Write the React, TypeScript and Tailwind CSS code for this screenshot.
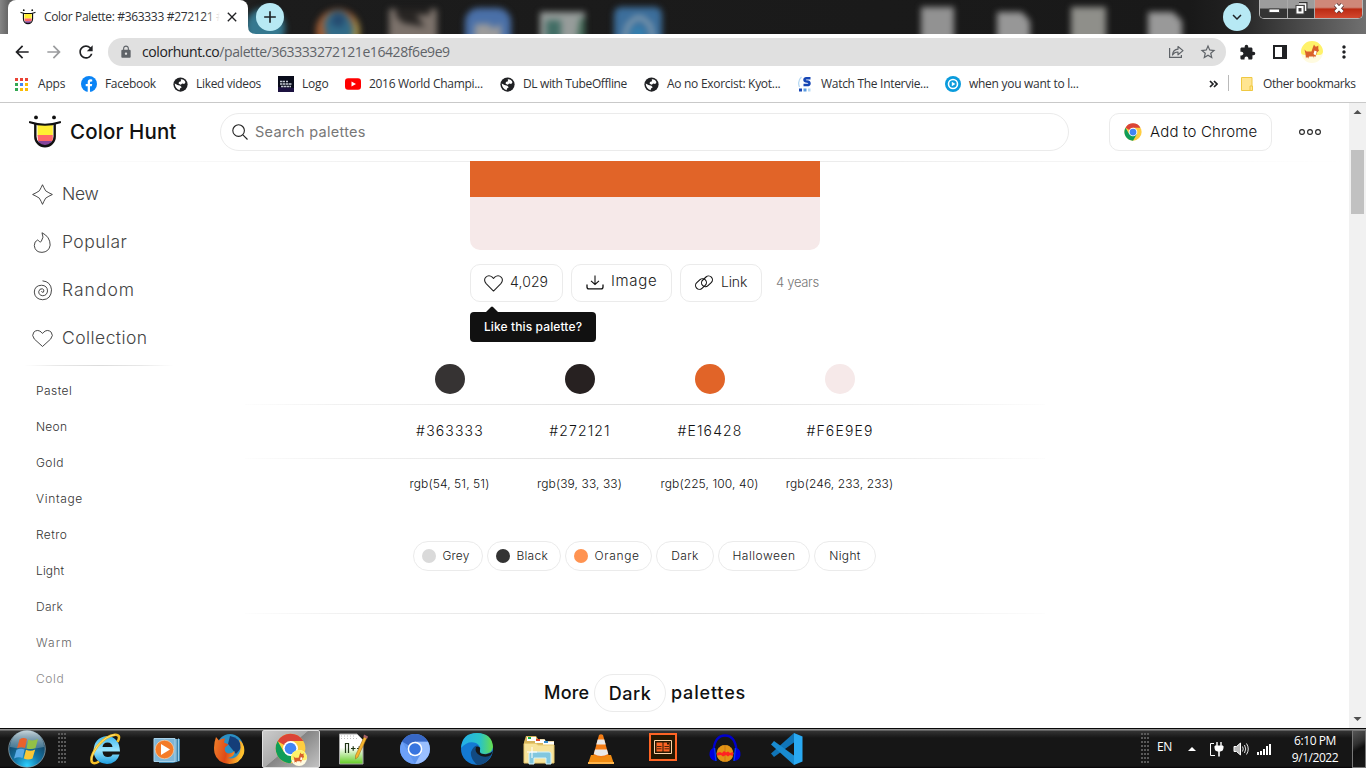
import type { ReactNode } from "react";
import {
  MdAdd,
  MdArrowBack,
  MdArrowForward,
  MdClose,
  MdExpandMore,
  MdExtension,
  MdLock,
  MdMoreVert,
  MdRefresh,
  MdStarBorder,
} from "react-icons/md";

const ui = "font-['Open_Sans','Noto_Sans',sans-serif]";
const poppins = "font-['Inter','Open_Sans',sans-serif]";

/* ---------- logos ---------- */

function HuntLogo({ className }: { className: string }) {
  return (
    <svg viewBox="0 0 32 34" className={className}>
      <path d="M6.500 9.500H25.500V21A9.500 9.500 0 0 1 6.500 21Z" fill="#fff" />
      <path d="M8.500 9H23.800V20.500H8.500Z" fill="#ffee33" />
      <path d="M8.500 20H23.800V26H9Z" fill="#ff6768" />
      <path d="M9.200 26H23A7.200 6.500 0 0 1 9.200 26Z" fill="#84449a" />
      <path d="M1 7.200Q16 12.300 31 7.200" fill="none" stroke="#111" strokeWidth="2.200" strokeLinecap="round" />
      <path d="M6.300 9V21.500A9.700 9.700 0 0 0 25.700 21.500V9" fill="none" stroke="#111" strokeWidth="2.400" />
      <circle cx="7" cy="2.400" r="1.900" fill="#111" />
      <circle cx="25" cy="2.400" r="1.900" fill="#111" />
    </svg>
  );
}

function ChromeLogo({ className, ring = "#fff" }: { className: string; ring?: string }) {
  return (
    <svg viewBox="0 0 48 48" className={className}>
      <circle cx="24" cy="24" r="23" fill="#ffcd40" />
      <path d="M24 24L4 12.600A23 23 0 0 1 43.900 12.500H24Z" fill="#db4437" />
      <path d="M4.100 12.500A23 23 0 0 0 24 47L34 29.700 24 24 14 29.700Z" fill="#0f9d58" />
      <circle cx="24" cy="24" r="11.500" fill={ring} />
      <circle cx="24" cy="24" r="9" fill="#4285f4" />
    </svg>
  );
}

function Corgi({ className }: { className: string }) {
  return (
    <svg viewBox="0 0 22 22" className={className}>
      <circle cx="11" cy="11" r="11" fill="#fffbe0" />
      <path d="M0 11A11 11 0 0 1 22 11Q21 14.500 18 14H4Q0 14 0 11Z" fill="#fff26a" />
      <path d="M3.500 8.500L5.500 10.500H10.500L12 6 13 3.500 14.300 5.500H15.800L17.300 4.500V8L18 9.500 16 11.500 15 14.500V17.500H13L12.500 15.500 8 15.500 7 18H5L4.500 13Z" fill="#d9602b" />
      <path d="M13.500 9.500L15.800 10.500 14.500 14.500 12.500 13Z" fill="#fff" />
      <path d="M13 15.500H15V18H13ZM5 16.500H7V18.500H5Z" fill="#fff3dc" />
    </svg>
  );
}

function Globe() {
  return (
    <svg className="size-[15px] shrink-0" viewBox="0 0 16 16">
      <circle cx="8" cy="8" r="7.600" fill="#202124" />
      <path d="M8.300 2.300Q12 2 13.300 5.600L12 7.500 9.800 7 8.300 8.200 6 7.300 6.300 5.300 8.500 4.500Z" fill="#fff" />
      <path d="M1.800 7L4.800 8.500 7.800 9.300 9.300 10.800 7.500 12.300 7 14Q2.300 12.800 1.800 7Z" fill="#fff" />
    </svg>
  );
}

/* ---------- browser frame ---------- */

function TitleBar() {
  return (
    <div className="relative flex h-[34px] shrink-0 overflow-hidden bg-[linear-gradient(90deg,#858585_0px,#5e5e5e_10px,#1c1c1c_260px,#191919_1190px,#202020_1230px,#707070_1366px)]">
      <svg className="absolute left-0 top-0 h-[44px] w-[1366px] blur-[3px]" viewBox="0 0 1366 44">
        <circle cx="265" cy="28" r="20" fill="#35788f" />
        <circle cx="338" cy="31" r="22" fill="#a05e35" />
        <path d="M324 24Q328 10 340 11Q352 13 355 40H327Z" fill="#316b88" />
        <path d="M335 12L346 16 342 28 330 24Z" fill="#254b70" />
        <path d="M353 15Q363 26 358 42H350Q357 25 353 15Z" fill="#a39148" />
        <path d="M389 9H437V44H389Z" fill="#7c726b" />
        <path d="M396 9H430V15H416L425 27 403 23 396 16Z" fill="#282523" />
        <rect x="465" y="8" width="46" height="44" rx="14" fill="#4a70a8" />
        <path d="M475 24H491V29L501 24V44H474Z" fill="#9b9b9b" />
        <path d="M540 12H585V44H540Z" fill="#969c9a" />
        <path d="M546 20H561V44H546Z" fill="#426d65" />
        <path d="M580 18H585V44H576Z" fill="#426b58" />
        <rect x="614" y="7" width="48" height="44" rx="7" fill="#3c6e9b" />
        <path d="M624 40L628 25 636 18H642L650 25 653 40" fill="none" stroke="#8aa0b0" strokeWidth="4" />
        <circle cx="638" cy="33" r="7" fill="#347fae" />
        <path d="M921 7H954V44H921Z" fill="#929292" />
        <path d="M997 12H1022L1030 21V44H997Z" fill="#979797" />
        <path d="M1071 7H1106V44H1071Z" fill="#8f8f8a" />
        <path d="M1148 12H1173L1182 21V44H1148Z" fill="#999" />
      </svg>
      <div className="relative ml-2 flex h-full w-[240px] items-center rounded-t-lg bg-white pl-3">
        <HuntLogo className="h-4 w-4" />
        <div className={`relative ml-2 h-5 w-[180px] whitespace-nowrap text-[12px] leading-5 tracking-[-0.33px] text-[#303236] ${ui}`}>
          Color Palette: #363333 #272121 #
          <div className="absolute right-0 top-0 h-5 w-5 bg-linear-to-r from-white/0 to-white to-80%" />
        </div>
        <MdClose className="size-4 text-[#202124]" />
      </div>
      <svg className="relative mt-auto size-2" viewBox="0 0 8 8"><path d="M0 0Q0 8 8 8H0Z" fill="#fff" /></svg>
      <div className="relative mt-[3px] flex size-7 items-center justify-center rounded-full bg-[#b7e9f4]">
        <MdAdd className="size-5 text-[#1e2226]" />
      </div>
      <div className="relative ml-auto mr-2 mt-[3px] flex size-7 items-center justify-center rounded-full bg-[#b7e9f4]">
        <MdExpandMore className="size-[18px] text-[#1e2226]" />
      </div>
      <div className="relative mr-[3px] flex h-[19px] w-[104px] overflow-hidden rounded-b-[5px] border border-t-0 border-[#b5b5b5] bg-[#222]">
        <div className="flex w-7 items-center justify-center border-r border-[#aaa] bg-linear-to-b from-[#9c9c9c] from-45% to-[#343434] to-50%">
          <svg className="h-4 w-4" viewBox="0 0 16 16"><path d="M3 8H13.500V11.500H3Z" fill="#fff" stroke="#444" /></svg>
        </div>
        <div className="flex w-[27px] items-center justify-center border-r border-[#aaa] bg-linear-to-b from-[#9c9c9c] from-45% to-[#343434] to-50%">
          <svg className="h-4 w-4" viewBox="0 0 16 16" fill="none">
            <path d="M6 3H12.500V10" stroke="#333" strokeWidth="4" /><path d="M6 3H12.500V10" stroke="#fff" strokeWidth="1.600" />
            <path d="M4.500 6H9.500V11.500H4.500Z" stroke="#444" strokeWidth="4" /><path d="M4.500 6H9.500V11.500H4.500Z" stroke="#fff" strokeWidth="2" />
          </svg>
        </div>
        <div className="flex flex-1 items-center justify-center bg-linear-to-b from-[#cf8879] from-40% via-[#bb2a12] via-50% to-[#d3472e]">
          <svg className="h-4 w-4" viewBox="0 0 16 16" fill="none"><path d="M4.500 3.500L11.500 11M11.500 3.500L4.500 11" stroke="#533" strokeWidth="4.400" /><path d="M4.500 3.500L11.500 11M11.500 3.500L4.500 11" stroke="#fff" strokeWidth="2.800" /></svg>
        </div>
      </div>
    </div>
  );
}

function Toolbar() {
  return (
    <div className="flex h-9 shrink-0 items-center bg-white pl-3">
      <MdArrowBack className="size-5 text-[#202124]" />
      <MdArrowForward className="ml-3 size-5 text-[#9b9c9e]" />
      <MdRefresh className="ml-3 size-5 text-[#202124]" />
      <div className="ml-3 flex h-7 w-[1118px] items-center rounded-full bg-[#e0e0e0] pl-[11px] pr-[9px]">
        <MdLock className="size-[14px] text-[#5f6368]" />
        <div className={`ml-[9px] whitespace-nowrap text-[14px] leading-5 tracking-[-0.42px] text-[#5f6368] ${ui}`}>
          <span className="text-[#202124]">colorhunt.co</span>/palette/363333272121e16428f6e9e9
        </div>
        <svg className="ml-auto size-4" viewBox="0 0 16 16" fill="none" stroke="#5f6368" strokeWidth="1.200">
          <path d="M1.600 4V13.400H13.400V11" />
          <path d="M4.500 11Q5 5.500 10 5.200V2.500L15 6.600 10 10.800V8Q6.500 7.800 4.500 11Z" strokeLinejoin="round" />
        </svg>
        <MdStarBorder className="ml-[15px] size-[18px] text-[#5f6368]" />
      </div>
      <MdExtension className="ml-[13px] size-[17px] text-[#202124]" />
      <svg className="ml-[17px] size-[14px]" viewBox="0 0 14 14"><path d="M0 0H14V14H0Z" fill="#202124" /><path d="M2 2H9V12H2Z" fill="#fff" /></svg>
      <Corgi className="ml-[14px] size-[22px]" />
      <MdMoreVert className="ml-[11px] size-5 text-[#202124]" />
    </div>
  );
}

function Bookmark({ icon, label, width, track }: { icon: ReactNode; label: string; width: string; track: string }) {
  return (
    <div className={`flex shrink-0 items-center ${width}`}>
      <div className="flex w-4 justify-center">{icon}</div>
      <span className={`ml-2 whitespace-nowrap ${track}`}>{label}</span>
    </div>
  );
}

function BookmarksBar() {
  return (
    <div className={`flex h-[33px] shrink-0 items-start border-b border-[#c9c9c9] bg-white pl-[14px] pt-[5px] text-[12px] leading-[18px] text-[#303236] ${ui}`}>
      <Bookmark
        width="w-[67px]"
        track="tracking-[-0.2px]"
        label="Apps"
        icon={
          <svg className="-ml-[2px] size-[14px]" viewBox="0 0 14 14">
            <path d="M1 1h3v3h-3zM6 1h3v3h-3zM11 1h3v3h-3z" fill="#ea4335" />
            <path d="M1 6h3v3h-3zM1 11h3v3h-3z" fill="#34a853" /><path d="M6 6h3v3h-3z" fill="#4285f4" />
            <path d="M11 6h3v3h-3zM6 11h3v3h-3zM11 11h3v3h-3z" fill="#fbbc04" />
          </svg>
        }
      />
      <Bookmark
        width="w-[91px]"
        track="tracking-[-0.33px]"
        label="Facebook"
        icon={
          <svg className="size-4" viewBox="0 0 16 16">
            <circle cx="8" cy="8" r="8" fill="#0b84f5" />
            <path d="M6.700 16V10.300H4.700V8H6.700V6.300Q6.700 3.300 9.500 3.300L11.200 3.500V5.400H10Q9 5.400 9 6.500V8H11.200L10.800 10.300H9V16Z" fill="#fff" />
          </svg>
        }
      />
      <Bookmark width="w-[106px]" track="tracking-[-0.32px]" label="Liked videos" icon={<Globe />} />
      <Bookmark
        width="w-[67px]"
        track="tracking-[-0.2px]"
        label="Logo"
        icon={
          <svg className="size-4" viewBox="0 0 16 16">
            <path d="M0 0H16V16H0Z" fill="#090c1b" /><path d="M0 11L16 12V16H0Z" fill="#1c1240" />
            <path d="M2 5.500H7M8 5.500H10M2 8H14M3 10.500H13" stroke="#c5cad3" strokeWidth="1.500" strokeDasharray="2.500 .5" />
          </svg>
        }
      />
      <Bookmark
        width="w-[154px]"
        track="tracking-[-0.3px]"
        label="2016 World Champi..."
        icon={<svg className="size-4" viewBox="0 0 16 16"><rect y="2.300" width="16" height="11.400" rx="3" fill="#f00" /><path d="M6.500 5.500L11 8 6.500 10.500Z" fill="#fff" /></svg>}
      />
      <Bookmark width="w-[144px]" track="tracking-[-0.36px]" label="DL with TubeOffline" icon={<Globe />} />
      <Bookmark width="w-[154px]" track="tracking-[-0.29px]" label="Ao no Exorcist: Kyot..." icon={<Globe />} />
      <Bookmark
        width="w-[148px]"
        track="tracking-[-0.3px]"
        label="Watch The Intervie..."
        icon={
          <svg className="size-4" viewBox="0 0 16 16">
            <path d="M4.500 1Q0 5 2.500 11" fill="none" stroke="#b7d9f3" strokeWidth="1.300" />
            <path d="M13.500 2.300H9.500Q7.400 2.500 7.500 4T10 5.500T12.500 7.300T10 9H6.500" fill="none" stroke="#1746b5" strokeWidth="2.500" />
            <path d="M2 12.500h3v3h-3z" fill="#1746b5" /><path d="M6.500 12.500h3v3h-3z" fill="#5a9bdf" /><path d="M11 12.500h2.500v3h-2.500z" fill="#b7d9f3" />
          </svg>
        }
      />
      <Bookmark
        width="w-[200px]"
        track="tracking-[-0.28px]"
        label="when you want to l..."
        icon={<svg className="size-4" viewBox="0 0 16 16"><circle cx="8" cy="8" r="8" fill="#0a9bdc" /><circle cx="8" cy="8" r="4.500" fill="none" stroke="#fff" strokeWidth="1.600" /><path d="M6.800 5.800L10.400 8 6.800 10.200Z" fill="#fff" /></svg>}
      />
      <svg className="ml-auto mt-[5px] h-2 w-[9px]" viewBox="0 0 9 8" fill="none" stroke="#202124" strokeWidth="1.700"><path d="M1 1L4 4 1 7M5 1L8 4 5 7" /></svg>
      <div className="ml-[10px] h-4 w-px bg-[#b9b9b9]" />
      <svg className="ml-3 mt-[2px] h-[14px] w-3" viewBox="0 0 12 14"><path d="M.5 .5H11V13.500H.5Z" fill="#ffe591" stroke="#efc842" /><path d="M9 9H11.500V13.500H9Z" fill="#ffe591" stroke="#efc842" /></svg>
      <span className="ml-[10px] mr-[10px] w-[93px] whitespace-nowrap tracking-[-0.4px]">Other bookmarks</span>
    </div>
  );
}

/* ---------- page ---------- */

function HeartIcon({ className }: { className: string }) {
  return (
    <svg viewBox="0 0 20 18" className={className} fill="none" stroke="currentColor" strokeWidth="1.100" strokeLinejoin="round">
      <path d="M10 17L2.200 9.200Q-.8 5.600 1.700 2.400Q5-.8 8.700 2.200L10 3.700 11.300 2.200Q15-.8 18.300 2.400Q20.800 5.600 17.800 9.200Z" />
    </svg>
  );
}

function PageHeader() {
  return (
    <div className="relative flex h-[58px] shrink-0 items-center pl-[29px] text-[#111]">
      <HuntLogo className="h-[34px] w-8" />
      <span className="ml-[9px] w-[150px] text-[20.5px] font-medium leading-7 tracking-[0.12px]">Color Hunt</span>
      <div className="flex h-[38px] w-[849px] items-center rounded-full border border-[#ebebeb] pl-[11px]">
        <svg className="size-4" viewBox="0 0 16 16" fill="none" stroke="#222" strokeWidth="1.100"><circle cx="6.600" cy="6.600" r="5.800" /><path d="M10.900 10.900L15.500 15.500" /></svg>
        <span className="ml-[7px] text-[14.5px] leading-5 tracking-[0.29px] text-[#777]">Search palettes</span>
      </div>
      <div className="ml-10 flex h-[38px] w-[163px] items-center rounded-[10px] border border-[#ebebeb] pl-[14px]">
        <ChromeLogo className="size-[18px]" />
        <span className="ml-2 whitespace-nowrap text-[15px] font-light leading-5 tracking-[0.16px]">Add to Chrome</span>
      </div>
      <svg className="ml-[27px] h-[6px] w-[22px]" viewBox="0 0 22 6" fill="none" stroke="#222" strokeWidth="1.100"><circle cx="3" cy="3" r="2.400" /><circle cx="11" cy="3" r="2.400" /><circle cx="19" cy="3" r="2.400" /></svg>
      <div className="absolute -bottom-px left-0 h-px w-full bg-linear-to-r from-transparent via-[#e6e6e6] to-transparent" />
    </div>
  );
}

function Sidebar() {
  const nav = [
    { label: "New", track: "tracking-[-0.35px]", icon: <path d="M10 .7Q11.200 3.400 13 6.500Q16 8.500 19.400 10Q16 11.500 13 13.500Q11.200 16.500 10 19.400Q8.800 16.500 7 13.500Q4 11.500 .6 10Q4 8.500 7 6.500Q8.800 3.400 10 .7Z" /> },
    { label: "Popular", track: "tracking-[0.45px]", icon: <path d="M9.500 .700Q11.800 5 8.800 9Q8 9.800 7.200 9.300Q6.200 8 5.500 7.500Q2 9 2.200 13Q3 19.400 9.500 19.400Q16.300 19 17.300 12.500Q17.300 4.500 9.500 .700Z" /> },
    { label: "Random", track: "tracking-[1px]", icon: <path d="M10 .800Q17.800 1.500 18.600 9.300Q18.300 18.500 10.200 18.800Q2.600 18.300 2.200 11.500Q2.400 5.300 9 5Q14.600 5.200 14.800 10.400Q14.300 14.800 10.200 15Q6.300 14.500 6.400 11Q7 8 10 8.300Q12 9.300 11 11.500Q9.500 12.300 9 10.700" /> },
    { label: "Collection", track: "tracking-[0.44px]", icon: <path d="M10 17.600L2.200 10.500Q-.7 7 1.700 4Q5 .900 8.600 3.700L10 5.200 11.400 3.700Q15 .900 18.300 4Q20.700 7 17.800 10.500Z" /> },
  ];
  const tags = [
    { label: "Pastel", style: "tracking-[0.45px] text-[#333]" },
    { label: "Neon", style: "tracking-[0.25px] text-[#333]" },
    { label: "Gold", style: "tracking-[0.45px] text-[#333]" },
    { label: "Vintage", style: "tracking-[0.65px] text-[#333]" },
    { label: "Retro", style: "tracking-[0.4px] text-[#333]" },
    { label: "Light", style: "tracking-[0.15px] text-[#333]" },
    { label: "Dark", style: "tracking-[0.3px] text-[#444]" },
    { label: "Warm", style: "tracking-[1.1px] text-[#666]" },
    { label: "Cold", style: "tracking-[0.6px] text-[#888]" },
  ];
  return (
    <div className="flex w-[245px] shrink-0 flex-col pt-[9px] font-light">
      {nav.map((n) => (
        <div key={n.label} className="flex h-12 items-center pl-8">
          <svg className="size-[21px]" viewBox="0 0 20 20" fill="none" stroke="#333" strokeWidth=".85">{n.icon}</svg>
          <span className={`ml-[9px] text-[17.5px] leading-6 text-[#444] ${n.track}`}>{n.label}</span>
        </div>
      ))}
      <div className="ml-6 mt-[3px] h-px w-[150px] bg-[linear-gradient(90deg,transparent,#e8e8e8_22%,#dcdcdc_50%,#e8e8e8_78%,transparent)]" />
      <div className="mt-[7px] flex flex-col pl-9 text-[12px] leading-9">
        {tags.map((t) => <span key={t.label} className={t.style}>{t.label}</span>)}
      </div>
    </div>
  );
}

function Divider({ className }: { className: string }) {
  return <div className={`h-px w-[800px] shrink-0 bg-[linear-gradient(90deg,#fdfdfd,#f1f1f1_12%,#dfdfdf_50%,#f1f1f1_88%,#fdfdfd)] ${className}`} />;
}

function Palette() {
  const colors = [
    { hex: "#363333", rgb: "rgb(54, 51, 51)", bg: "bg-[#363333]" },
    { hex: "#272121", rgb: "rgb(39, 33, 33)", bg: "bg-[#272121]" },
    { hex: "#E16428", rgb: "rgb(225, 100, 40)", bg: "bg-[#e16428]" },
    { hex: "#F6E9E9", rgb: "rgb(246, 233, 233)", bg: "bg-[#f6e9e9]" },
  ];
  const tags = [
    { label: "Grey", width: "w-[70px]", dot: "bg-[#dadada]", track: "tracking-[0.15px]" },
    { label: "Black", width: "w-[74px]", dot: "bg-[#333]", track: "tracking-[0.25px]" },
    { label: "Orange", width: "w-[87px]", dot: "bg-[#ff9351]", track: "tracking-[0.65px]" },
    { label: "Dark", width: "w-[58px]", dot: "", track: "tracking-[0.4px]" },
    { label: "Halloween", width: "w-[92px]", dot: "", track: "tracking-[0.5px]" },
    { label: "Night", width: "w-[62px]", dot: "", track: "tracking-[0.35px]" },
  ];
  const button = "flex h-[38px] items-center rounded-[10px] border border-[#ebebeb] bg-white text-[14px] text-[#222]";
  return (
    <div className="relative flex w-[800px] shrink-0 flex-col items-center font-light">
      <div className="flex w-[350px] shrink-0 flex-col overflow-hidden rounded-b-[10px]">
        <div className="h-9 bg-[#e16428]" />
        <div className="h-[53px] bg-[#f6e9e9]" />
      </div>
      <div className="relative mt-[14px] flex w-[350px] shrink-0 gap-2">
        <div className={`${button} w-[93px] pl-[13px]`}>
          <HeartIcon className="mt-px h-[17px] w-[19px]" />
          <span className="mb-[3px] ml-[7px] tracking-[0.1px]">4,029</span>
        </div>
        <div className={`${button} w-[101px] pl-[14px]`}>
          <svg className="mb-px h-[15px] w-[18px]" viewBox="0 0 18 15" fill="none" stroke="#111" strokeWidth="1.100"><path d="M9 .500V9.500M5 5.800L9 9.500 13 5.800" /><path d="M1 9.500V12Q1 13.900 3 13.900H15Q17 13.900 17 12V9.500" strokeWidth="1.300" /></svg>
          <span className="mb-[3px] ml-[7px] text-[15px] tracking-[0.65px]">Image</span>
        </div>
        <div className={`${button} w-[82px] pl-[13px]`}>
          <svg className="size-5" viewBox="0 0 20 20" fill="none" stroke="#111" strokeWidth="1.100">
            <rect x="1" y="7.200" width="12" height="7.600" rx="3.800" transform="rotate(-43 7 11)" />
            <rect x="7" y="4.500" width="12" height="7.600" rx="3.800" transform="rotate(-43 13 8.300)" />
          </svg>
          <span className="mb-[3px] ml-[7px] tracking-[-0.15px]">Link</span>
        </div>
        <span className="ml-[6px] whitespace-nowrap text-[13px] leading-[37px] tracking-[-0.3px] text-[#777]">4 years</span>
        <div className="absolute left-0 top-12 flex h-[30px] w-[126px] items-center justify-center rounded bg-[#111] text-[12px] font-medium tracking-[0.12px] text-white">
          Like this palette?
          <svg className="absolute -top-[6px] left-4 h-[6px] w-3" viewBox="0 0 12 6"><path d="M0 6L5 1Q6 0 7 1L12 6Z" fill="#111" /></svg>
        </div>
      </div>
      <div className="mt-[62px] grid shrink-0 grid-cols-4">
        {colors.map((c) => <div key={c.hex} className="flex w-[130px] justify-center"><div className={`size-[30px] rounded-full ${c.bg}`} /></div>)}
      </div>
      <Divider className="mt-[10px]" />
      <div className="grid h-[53px] shrink-0 grid-cols-4 text-center text-[14px] leading-[51px] tracking-[1.15px] text-[#111]">
        {colors.map((c) => <div key={c.hex} className="w-[130px]">{c.hex}</div>)}
      </div>
      <Divider className="" />
      <div className="mr-px grid shrink-0 grid-cols-4 text-center text-[12px] leading-[50px] tracking-[0.1px] text-[#111]">
        {colors.map((c) => <div key={c.hex} className="w-[130px]">{c.rgb}</div>)}
      </div>
      <div className="mr-[2px] mt-8 flex shrink-0 gap-1 text-[12px] text-[#222]">
        {tags.map((t) => (
          <div key={t.label} className={`flex h-[30px] items-center rounded-full border border-[#ebebeb] ${t.width} ${t.track} ${t.dot ? "pl-2" : "justify-center pl-px"}`}>
            {t.dot && <span className={`mr-[7px] size-[14px] rounded-full ${t.dot}`} />}
            <span>{t.label}</span>
          </div>
        ))}
      </div>
      <Divider className="mt-[42px]" />
      <div className="mt-[60px] flex h-[38px] shrink-0 items-center pb-px text-[18px] font-medium text-[#111]">
        <span className="w-[50px] tracking-[0.2px]">More</span>
        <span className="-mb-px mr-[5px] flex h-[38px] w-[72px] items-center justify-center rounded-full border border-[#ebebeb] tracking-[0.5px]">Dark</span>
        <span className="w-[75px] tracking-[0.82px]">palettes</span>
      </div>
    </div>
  );
}

function Scrollbar() {
  return (
    <div className="flex w-[17px] shrink-0 flex-col items-center justify-between bg-[#f1f1f1]">
      <svg className="size-[17px]" viewBox="0 0 17 17"><path d="M4.500 11L8.500 7 12.500 11Z" fill="#505050" /></svg>
      <div className="mb-auto mt-[30px] h-16 w-[13px] bg-[#c1c1c1]" />
      <svg className="size-[17px]" viewBox="0 0 17 17"><path d="M4.500 6L8.500 10 12.500 6Z" fill="#505050" /></svg>
    </div>
  );
}

/* ---------- taskbar ---------- */

function Grip() {
  return <div className="h-[31px] w-2 bg-[radial-gradient(circle_at_1px_1px,#5a5a5a_0.7px,transparent_1px)] bg-[size:3px_4px]" />;
}

function StartOrb() {
  return (
    <svg className="size-[38px] shrink-0" viewBox="0 0 38 38">
      <defs>
        <radialGradient id="orb" cx="50%" cy="95%" r="85%"><stop offset="0" stopColor="#2bd0ff" /><stop offset=".4" stopColor="#1577a8" /><stop offset="1" stopColor="#12344f" /></radialGradient>
        <linearGradient id="orbShine" x1="0" y1="0" x2="0" y2="1"><stop offset="0" stopColor="#c8d6dc" /><stop offset="1" stopColor="#6d9ab0" stopOpacity=".5" /></linearGradient>
      </defs>
      <circle cx="19" cy="19" r="18.300" fill="url(#orb)" stroke="#8aa2ad" strokeWidth=".8" />
      <path d="M2 17A17 16.500 0 0 1 36 17Q19 21 2 17Z" fill="url(#orbShine)" />
      <path d="M11.500 9.500Q15 7 19 9L17 18Q13 16.300 9 18.300Z" fill="#e8622c" />
      <path d="M20.300 9.500Q24.500 11.500 30 9L27.500 18Q23 20 18.500 18.200Z" fill="#92c147" />
      <path d="M8.500 19.800Q12.500 17.800 16.700 19.500L14.500 28Q10.500 26.500 6 28.500Z" fill="#5aaae6" />
      <path d="M18 19.800Q22.500 21.800 27.200 19.500L24.500 28.500Q20 30.500 15.800 28.500Z" fill="#fbc736" />
    </svg>
  );
}

function IeIcon() {
  return (
    <svg className="size-8" viewBox="0 0 32 32">
      <defs><linearGradient id="ie" x1="0" y1="0" x2="0" y2="1"><stop offset="0" stopColor="#3fb7ee" /><stop offset=".5" stopColor="#9be6ff" /><stop offset="1" stopColor="#1d9ee0" /></linearGradient></defs>
      <path fillRule="evenodd" d="M17 3Q29.500 4 30 18.500H12.500Q13 24 18 24Q21.500 24 22.500 21.500H29.500Q27 30.500 17 31Q4.500 30 3.500 18Q4 4.500 17 3ZM12.500 14H22.500Q22 9.500 17.500 9.500T12.500 14Z" fill="url(#ie)" />
      <path d="M27.500 9Q31.500 1.500 25 1.800Q16.500 2.500 7.500 13Q-.5 24 2 29.200Q4 31.500 9 28.500" fill="none" stroke="#f3bd26" strokeWidth="2.600" />
      <path d="M25 1.800Q16.500 2.500 7.500 13Q1 22.500 1.700 27" fill="none" stroke="#ffe576" strokeWidth="1" />
    </svg>
  );
}

function MediaIcon() {
  return (
    <svg className="mr-[3px] size-8" viewBox="0 0 32 32">
      <path d="M8 6H29V28L22 30H8Z" fill="#3d86b0" /><path d="M27.500 5.500V28M25 6V29" stroke="#9fcde6" />
      <path d="M3 5.500H24V28.500H3Z" fill="#7eb6d8" stroke="#a9d1e8" /><circle cx="13.500" cy="16.500" r="9.300" fill="#f47b28" stroke="#ffd2a9" strokeWidth=".7" /><path d="M10 11L19 16.500 10 22Z" fill="#fff" />
    </svg>
  );
}

function FirefoxIcon() {
  return (
    <svg className="mr-[2px] size-8" viewBox="0 0 32 32">
      <defs><linearGradient id="fox" x1="0" y1="0" x2="1" y2=".2"><stop offset="0" stopColor="#f0802a" /><stop offset=".5" stopColor="#de4a17" /><stop offset="1" stopColor="#ffc22e" /></linearGradient></defs>
      <circle cx="17" cy="14" r="13" fill="#2b8fc4" /><path d="M17 3Q28 5 28 15L23 21 15 11Z" fill="#153e79" />
      <path d="M3 4L6 7.500Q8.500 5 12 5.500L11 9.500 15.500 11.500 12 14.500Q11 19 15 20.500Q19 20.500 21.500 18Q22 24 14.500 25Q22 27 26 20.500Q29 15 26 6.500Q33 12 30.800 21Q27 31 16.500 31Q4 30 1.500 20Q0 12 3 4Z" fill="url(#fox)" />
    </svg>
  );
}

function NotepadIcon() {
  return (
    <svg className="size-8" viewBox="0 0 32 32">
      <defs><linearGradient id="npp" x1="0" y1="0" x2="0" y2="1"><stop offset=".45" stopColor="#fff" /><stop offset="1" stopColor="#62cc22" /></linearGradient></defs>
      <path d="M2.500 1H20L26 7V31H2.500Z" fill="url(#npp)" stroke="#a7a7a7" /><path d="M4 3H19M4 5.500H21" stroke="#bbb" strokeDasharray="1 2" />
      <path d="M8.500 20V10.500H11.500V20M14 15.500H18.500M16.200 13.200V17.800M20 15.500H24.500M22.200 13.200V17.800" fill="none" stroke="#203515" strokeWidth="1.200" />
      <path d="M27.500 3L30 4.500 21 24 18.500 26 18.500 22.500Z" fill="#f6b52e" stroke="#9b6515" strokeWidth=".5" /><path d="M27 1.500L31 3.500 30 6 26.500 4Z" fill="#a7636a" />
    </svg>
  );
}

function ChromiumIcon() {
  return (
    <svg className="size-8" viewBox="0 0 48 48"><circle cx="24" cy="24" r="22.500" fill="#5e95ee" /><path d="M24 24L4.500 12.800A22.500 22.500 0 0 1 43.500 13H24Z" fill="#3868c6" /><path d="M14.500 29.500L24 46.500A22.500 22.500 0 0 1 4.500 12.800Z" fill="#6ca0f8" /><path d="M43.500 13A22.500 22.500 0 0 1 24 46.500L34 29 24 13Z" fill="#9abfff" /><circle cx="24" cy="24" r="11" fill="#fff" /><circle cx="24" cy="24" r="8.700" fill="#3875df" /></svg>
  );
}

function EdgeIcon() {
  return (
    <svg className="size-8" viewBox="0 0 32 32">
      <defs>
        <linearGradient id="edgeTop"><stop offset="0" stopColor="#23aeea" /><stop offset=".6" stopColor="#2bc3c5" /><stop offset="1" stopColor="#67df4b" /></linearGradient>
      </defs>
      <circle cx="16" cy="16" r="16" fill="#1479d2" />
      <path d="M0 15Q1 0 16 0Q31 0 32 14Q31 21 23 21Q18 21 19 17Q20 13 15 10Q7 7 0 15Z" fill="url(#edgeTop)" />
      <path d="M13 14Q17 10 19 16Q17 22 24 22Q28 22 31 20Q27 32 16 32Q9 25 10 19Q11 16 13 14Z" fill="#124a82" />
      <path d="M15 14Q20 13 19 17Q18 21 23 21Q28 22 32 18L30 22Q26 25 20 23Q13 20 15 14Z" fill="#171717" />
    </svg>
  );
}

function ExplorerIcon() {
  return (
    <svg className="size-8" viewBox="0 0 32 32">
      <path d="M1 9L3 3H13L15 6H21L23 8H31V30H1Z" fill="#d7b45b" /><path d="M4 4H13V8H4ZM12 6.500H22V10H12ZM20 8.500H31V12H20Z" fill="#fff" />
      <path d="M5 4h3v2H5z" fill="#19ae44" /><path d="M13 6h4v2h-4z" fill="#d94829" /><path d="M21 8h4v2h-4z" fill="#3a91cf" />
      <path d="M1 10.500H13L15 12H31V30H1Z" fill="#f7e39b" stroke="#e8c96f" /><path d="M6 31V21Q6 19 8 19H26Q28 19 28 21V31H23V25H11V31Z" fill="#82c7df" stroke="#d5f3fa" /><path d="M9 14V25M4 19H14" stroke="#fff" strokeWidth="1" />
    </svg>
  );
}

function VlcIcon() {
  return (
    <svg className="size-8" viewBox="0 0 32 32">
      <path d="M6 22H26L29 31H3Z" fill="#f08b12" /><path d="M3 29H29V31H3Z" fill="#ffb44a" />
      <path d="M14 2Q16 .5 18 2L23.500 22Q16 27 8.500 22Z" fill="#f47d16" /><path d="M12.700 6.500H19.300L20.700 11.500H11.300Z" fill="#e9e9e9" /><path d="M10 16.500H22L23.200 21Q16 25 8.800 21Z" fill="#e9e9e9" />
    </svg>
  );
}

function ReaderIcon() {
  return (
    <svg className="mb-[3px] h-7 w-[28px]" viewBox="0 0 28 28">
      <path d="M1 1H27V27H1Z" fill="#251802" stroke="#ff6424" strokeWidth="2" /><path d="M5.500 7.500H22.500V20.500H5.500Z" fill="none" stroke="#ffd4a8" strokeWidth="1" />
      <path d="M7.500 9.500H13.500V18.500H7.500ZM14.500 9.500H20.500V18.500H14.500Z" fill="#ff6424" /><path d="M8 13.500H12.500M8 15.800H12.500M15.500 13.500H20M15.500 15.800H20" stroke="#251802" strokeWidth=".8" /><path d="M18 9.500V12L19 11 20 12V9.500Z" fill="#251802" />
    </svg>
  );
}

function AudacityIcon() {
  return (
    <svg className="size-8" viewBox="0 0 32 32">
      <circle cx="16" cy="20.500" r="8.500" fill="#d88613" /><path d="M10 15V26M12 13V28M14 12V29M18 12V29M20 13V28M22 15V26" stroke="#ffb51c" strokeWidth=".6" />
      <path d="M8 20L11 19 13 20 15 18 17 19.500 19 18.500 21 20 24 19V23L21 22 19 23.500 17 22 14 23.500 12 22 8 22.500Z" fill="#f22" />
      <path d="M4.500 17Q6 2.500 16 2.500T27.500 17" fill="none" stroke="#00c" strokeWidth="2.300" /><path d="M5 15Q0 16 .5 22Q1 27 6.500 28ZM27 15Q32 16 31.500 22Q31 27 25.500 28Z" fill="#00d" /><path d="M5.500 15L7 28M26.500 15L25 28" stroke="#03f" strokeWidth="1.500" />
    </svg>
  );
}

function CodeIcon() {
  return (
    <svg className="size-8" viewBox="0 0 32 32">
      <path d="M23 0L0 20.500 3 24 25 8Z" fill="#1075b8" /><path d="M23 32L0 11.500 3 8 25 24Z" fill="#198bd0" /><path d="M23 0L31.500 3.500V28.500L23 32Z" fill="#29a9f2" />
    </svg>
  );
}

function Taskbar() {
  const left = [<IeIcon />, <MediaIcon />, <FirefoxIcon />];
  const right = [<NotepadIcon />, <ChromiumIcon />, <EdgeIcon />, <ExplorerIcon />, <VlcIcon />, <ReaderIcon />, <AudacityIcon />, <CodeIcon />];
  return (
    <div className="flex h-10 shrink-0 items-center border-t border-[#080808] bg-[linear-gradient(#8d8d8d_0px,#8d8d8d_1px,#333_2px,#161616_9px,#161616_37px,#050205_39px)] pl-2">
      <StartOrb />
      <div className="ml-3 w-[17px]"><Grip /></div>
      {left.map((icon, i) => <div key={i} className="flex w-[62px] justify-center">{icon}</div>)}
      <div className="ml-px flex h-[38px] w-[58px] items-center justify-center rounded-[2px] border border-[#e0e0e0] bg-[linear-gradient(140deg,#ccc_0%,#aaa_45%,#858585_46%,#c2c2c2_100%)]">
        <div className="relative size-8"><ChromeLogo className="size-[31px]" /><Corgi className="absolute -bottom-px right-0 size-4" /></div>
      </div>
      <div className="ml-[2px] flex">{right.map((icon, i) => <div key={i} className="flex w-[62px] items-center justify-center">{icon}</div>)}</div>
      <div className="ml-auto w-4"><Grip /></div>
      <span className={`w-[31px] pb-1 text-[12px] leading-5 tracking-[-0.5px] text-white ${ui}`}>EN</span>
      <svg className="mt-[1px] h-1 w-2" viewBox="0 0 8 4"><path d="M0 4L4 0 8 4Z" fill="#fff" /></svg>
      <svg className="ml-[13px] size-4" viewBox="0 0 16 16" fill="none" stroke="#fff"><path d="M5 2.500H1.500V14.500H6" /><path d="M8 1V5M12 1V5" strokeWidth="1.400" /><path d="M6 5H14V7Q14 10 11.500 10H8.500Q6 10 6 7Z" fill="#fff" /><path d="M10 10V15.500" strokeWidth="1.600" /></svg>
      <svg className="ml-2 h-4 w-[17px]" viewBox="0 0 17 16" fill="none" stroke="#fff"><path d="M1 5.500H3.500L7.500 2V14L3.500 10.500H1Z" fill="#bbb" /><path d="M9.500 5.500Q11 8 9.500 10.500M11.500 4Q14 8 11.500 12M13.500 2.500Q17 8 13.500 13.500" strokeWidth=".9" /></svg>
      <svg className="ml-[7px] h-3 w-[15px]" viewBox="0 0 15 12"><path d="M0 9h2v3h-2zM3 8h2v4h-2zM6 6h2v6h-2zM9 3h2v9h-2zM12 1h2v11h-2z" fill="#fff" /></svg>
      <div className={`ml-[14px] w-[58px] whitespace-nowrap text-center text-[12px] leading-[17px] tracking-[-0.44px] text-white ${ui}`}><div>6:10 PM</div><div>9/1/2022</div></div>
      <div className="ml-2 h-[38px] w-[14px] border border-[#777] bg-[linear-gradient(150deg,#555_0%,#303030_35%,#101010_50%,#181818_100%)]" />
    </div>
  );
}

export default function App() {
  return (
    <div className="flex h-[768px] w-[1366px] flex-col overflow-hidden bg-white">
      <TitleBar />
      <Toolbar />
      <BookmarksBar />
      <div className="flex h-[625px] shrink-0 overflow-hidden">
        <div className={`flex w-[1349px] flex-col overflow-hidden ${poppins}`}>
          <PageHeader />
          <div className="flex h-[567px] shrink-0"><Sidebar /><Palette /></div>
        </div>
        <Scrollbar />
      </div>
      <Taskbar />
    </div>
  );
}
